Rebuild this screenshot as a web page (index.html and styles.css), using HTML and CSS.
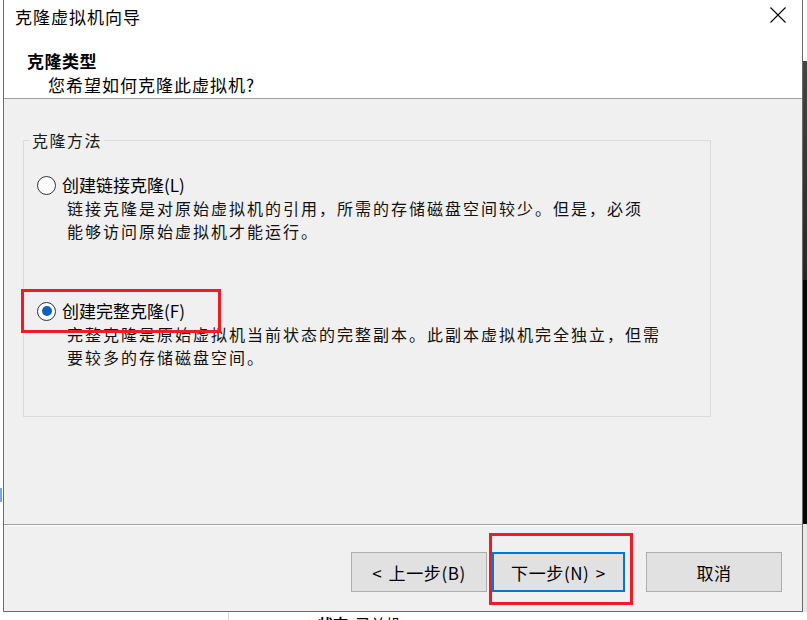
FILE: index.html
```html
<!DOCTYPE html>
<html lang="zh-CN">
<head>
<meta charset="utf-8">
<title>克隆虚拟机向导</title>
<link rel="stylesheet" href="styles.css">
</head>
<body>
<div class="screen">
  <div class="top-row">
    <div class="gutter"><div class="gutter-mark"></div></div>
    <div class="window">
      <div class="head">
        <div class="titlebar">
          <span class="title">克隆虚拟机向导</span>
          <svg class="close" width="16" height="16" viewBox="0 0 16 16" aria-hidden="true">
            <path d="M0.5 0.5 L15.5 15.5 M15.5 0.5 L0.5 15.5" stroke="#000" stroke-width="1.1" fill="none"/>
          </svg>
        </div>
        <div class="heading">克隆类型</div>
        <div class="subheading">您希望如何克隆此虚拟机?</div>
      </div>
      <div class="body">
        <fieldset class="group">
          <legend class="group-label">克隆方法</legend>
          <div class="option">
            <span class="radio"></span>
            <span class="option-label">创建链接克隆(L)</span>
          </div>
          <div class="desc">链接克隆是对原始虚拟机的引用，所需的存储磁盘空间较少。但是，必须<br>能够访问原始虚拟机才能运行。</div>
          <div class="option option-second">
            <span class="radio checked"></span>
            <span class="option-label">创建完整克隆(F)</span>
            <span class="mark mark-option"></span>
          </div>
          <div class="desc">完整克隆是原始虚拟机当前状态的完整副本。此副本虚拟机完全独立，但需<br>要较多的存储磁盘空间。</div>
        </fieldset>
      </div>
      <div class="footer">
        <button class="btn btn-prev">&lt; 上一步(B)</button>
        <button class="btn btn-next">下一步(N) &gt;<span class="mark mark-next"></span></button>
        <button class="btn btn-cancel">取消</button>
      </div>
    </div>
    <div class="right-strip">
      <div class="rs-white"></div>
      <div class="rs-dark"></div>
      <div class="rs-black"></div>
      <div class="rs-light"></div>
    </div>
  </div>
  <div class="bottom-strip">
    <div class="bs-left"></div>
    <div class="bs-text"><b>状态</b> 已关机</div>
  </div>
</div>
</body>
</html>
```
FILE: styles.css
```css
html, body {
  margin: 0;
  padding: 0;
}
body {
  width: 807px;
  height: 620px;
  overflow: hidden;
  background: #fff;
  color: #000;
  font-family: "Noto Sans CJK SC", "Microsoft YaHei", sans-serif;
}
.screen {
  display: flex;
  flex-direction: column;
  width: 807px;
  height: 620px;
}
.top-row {
  display: flex;
  height: 612px;
  flex: none;
}
.gutter {
  width: 3px;
  display: flex;
  flex-direction: column;
}
.gutter-mark {
  margin-top: 488px;
  width: 2px;
  height: 14px;
  background: #79a6dc;
}
.window {
  width: 800px;
  box-sizing: border-box;
  border: 1px solid #6b6b6b;
  border-top: none;
  display: flex;
  flex-direction: column;
  background: #f0f0f0;
}
.head {
  background: #fff;
  height: 98px;
  border-bottom: 1px solid #a0a0a0;
  flex: none;
}
.titlebar {
  display: flex;
  justify-content: space-between;
  align-items: center;
  height: 34px;
  padding: 0 16px 0 11px;
}
.title {
  font-size: 17px;
  letter-spacing: 1px;
  line-height: 24px;
}
.close {
  align-self: flex-start;
  margin-top: 7px;
}
.heading {
  margin-top: 15px;
  padding-left: 23px;
  font-size: 17px;
  font-weight: bold;
  letter-spacing: 0.5px;
  line-height: 24px;
}
.subheading {
  padding-left: 44px;
  font-size: 17px;
  letter-spacing: 1px;
  line-height: 24px;
}
.body {
  height: 425px;
  box-sizing: border-box;
  padding: 30px 0 0 19px;
  flex: none;
}
.group {
  margin: 0;
  width: 688px;
  box-sizing: border-box;
  border: 1px solid #dcdcdc;
  padding: 22px 0 47px 8px;
}
.group-label {
  padding: 0 2px;
  margin-left: -2px;
  font-size: 16px;
  letter-spacing: 1.5px;
  line-height: 22px;
  color: #1a1a1a;
}
.option {
  display: flex;
  align-items: center;
  height: 24px;
  padding-left: 5px;
  position: relative;
}
.option-second {
  margin-top: 56px;
}
.radio {
  width: 19px;
  height: 19px;
  box-sizing: border-box;
  border: 1px solid #333;
  border-radius: 50%;
  background: #fff;
  display: flex;
  align-items: center;
  justify-content: center;
  flex: none;
}
.radio.checked {
  border-color: #1f3554;
}
.radio.checked::after {
  content: "";
  width: 10px;
  height: 10px;
  border-radius: 50%;
  background: #0a62bd;
}
.option-label {
  margin-left: 6px;
  font-size: 17px;
  line-height: 24px;
  white-space: nowrap;
}
.desc {
  padding-left: 35px;
  font-size: 16px;
  letter-spacing: 2px;
  line-height: 23px;
  white-space: nowrap;
  color: #111;
}
.mark {
  position: absolute;
  box-sizing: border-box;
  border: 3px solid #ee1c25;
  pointer-events: none;
}
.mark-option {
  left: -11px;
  top: -10px;
  width: 200px;
  height: 44px;
}
.footer {
  flex: 1;
  border-top: 1px solid #a0a0a0;
  box-shadow: inset 0 1px 0 #fff;
  display: flex;
  justify-content: flex-end;
  align-items: flex-start;
  padding: 27px 20px 0 0;
}
.btn {
  height: 40px;
  box-sizing: border-box;
  border: 1px solid #adadad;
  background: #e1e1e1;
  font-family: inherit;
  font-size: 17px;
  letter-spacing: 0.6px;
  word-spacing: 2px;
  color: #000;
  padding: 0;
  margin: 0;
  position: relative;
}
.btn-prev {
  width: 136px;
}
.btn-next {
  width: 133px;
  margin-left: 5px;
  border: 2px solid #0078d7;
}
.btn-cancel {
  width: 136px;
  margin-left: 21px;
}
.mark-next {
  left: -5px;
  top: -21px;
  width: 144px;
  height: 72px;
}
.right-strip {
  width: 4px;
  display: flex;
  flex-direction: column;
}
.rs-white {
  height: 61px;
  background: #fff;
}
.rs-dark {
  height: 219px;
  background: linear-gradient(#444, #262626);
}
.rs-black {
  height: 244px;
  background: #050505;
}
.rs-light {
  flex: 1;
  background: #e8e8e8;
}
.bottom-strip {
  flex: 1;
  display: flex;
  overflow: hidden;
}
.bs-left {
  width: 228px;
  border-right: 1px solid #d9d9d9;
  flex: none;
}
.bs-text {
  margin-left: 89px;
  margin-top: 2px;
  font-size: 15px;
  line-height: 20px;
  white-space: nowrap;
}
.bs-text b {
  margin-right: 4px;
}
```
